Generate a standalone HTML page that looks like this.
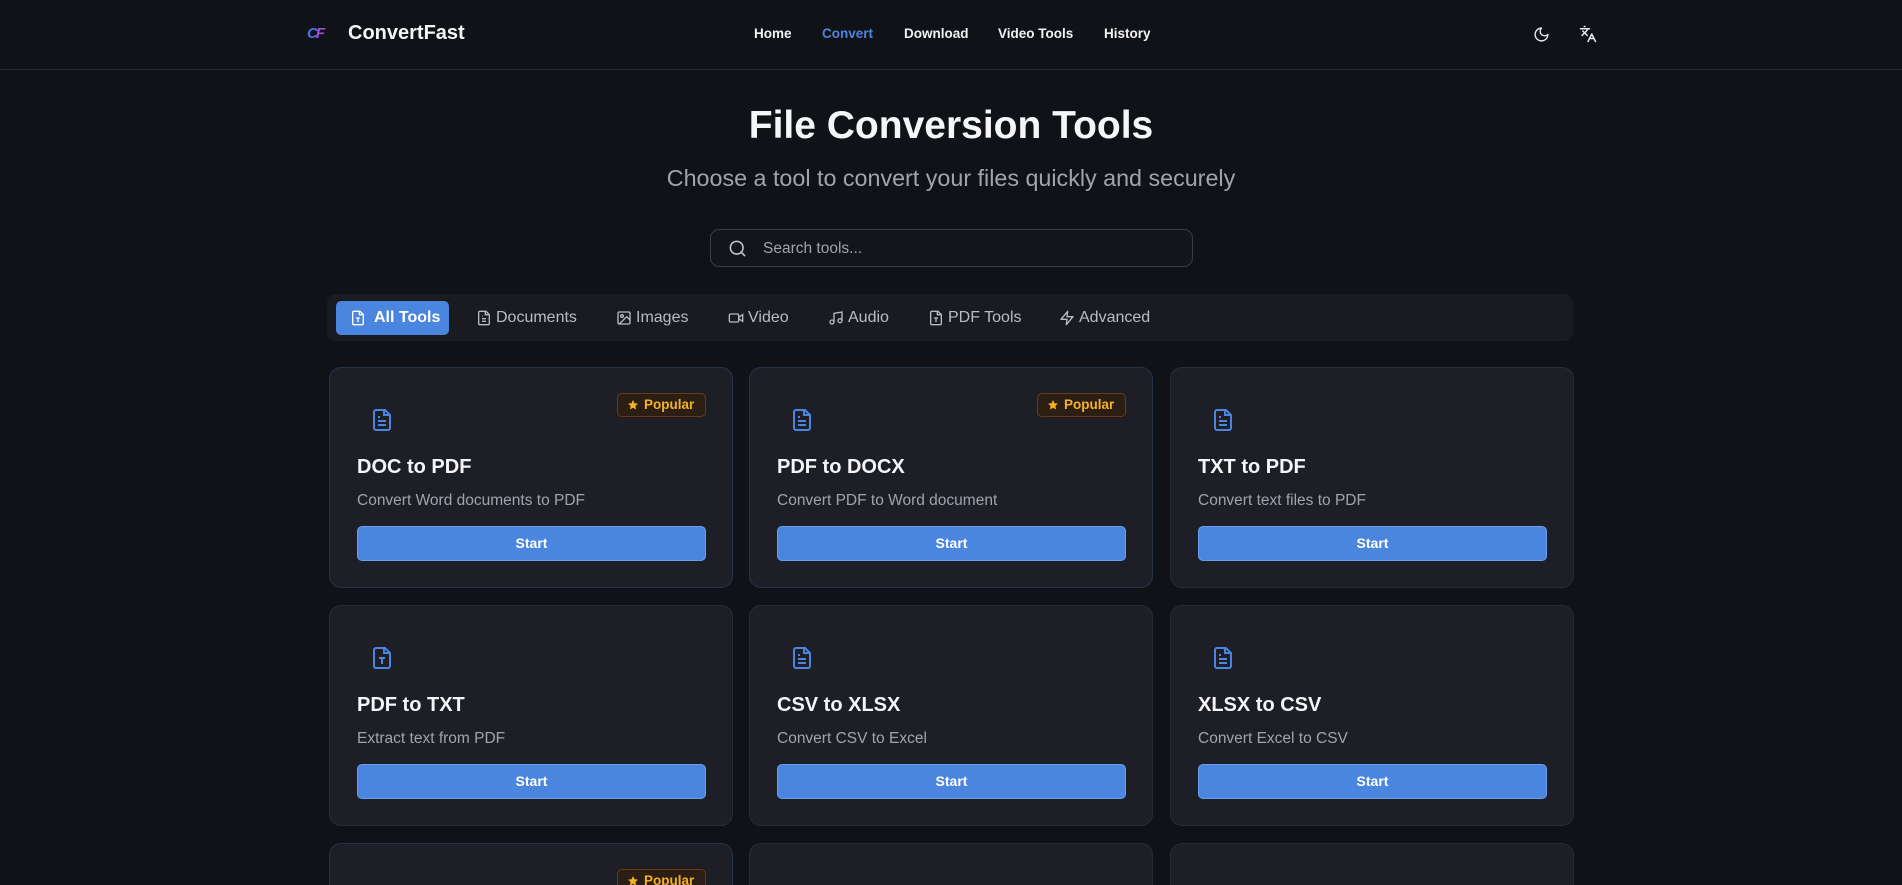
<!DOCTYPE html>
<html><head><meta charset="utf-8"><style>
*{box-sizing:border-box;margin:0;padding:0}
html,body{width:1902px;height:885px;overflow:hidden}
body{background:#111217;font-family:"Liberation Sans",sans-serif;color:#fff}
#w{position:relative;width:1902px;height:885px;overflow:hidden}
.hdr{position:absolute;left:0;top:0;width:1902px;height:70px;border-bottom:1px solid #272930}
.abs{position:absolute}
.nav a{position:absolute;top:26px;font-size:13.5px;font-weight:700;color:#f1f2f4;text-decoration:none}
h1{position:absolute;top:104px;width:100%;text-align:center;font-size:39px;font-weight:700;color:#f5f6f8}
.sub{position:absolute;top:165px;width:100%;text-align:center;font-size:23.3px;color:#a0a4ad}
.search{position:absolute;left:710px;top:229px;width:483px;height:38px;border:1px solid #3b3e46;border-radius:9px;background:#14151a}
.search span{position:absolute;left:52px;top:10px;font-size:15.5px;color:#a0a4ad}
.tabs{position:absolute;left:327px;top:294px;width:1246px;height:47px;background:#1a1b21;border-radius:9px}
.tab{position:absolute;top:7px;height:34px;font-size:16px;color:#b8bcc4;line-height:34px;padding-left:20px}
.tab svg{position:absolute;top:9px;left:0}
.tab.on{background:#4a86e0;border-radius:5px;color:#fff;font-weight:700}
.card{position:absolute;width:404px;height:221px;background:#1e1f26;border:1px solid #2a2c35;border-radius:12px}
.card.b{border-color:#283247}
.card .ic{position:absolute;left:40px;top:40px}
.card h3{position:absolute;left:27px;top:88px;font-size:20px;font-weight:700;color:#f5f6f8}
.card p{position:absolute;left:27px;top:124px;font-size:15.5px;color:#a0a4ad}
.card .btn{position:absolute;left:27px;top:158px;width:349px;height:35px;background:#4a86e0;border-radius:5px;border:1px solid #6a9ff0;text-align:center;line-height:33px;font-size:14px;font-weight:700;color:#fff}
.pop{position:absolute;left:287px;top:25px;width:89px;height:24px;border:1px solid #6b3a14;background:#2d1e14;border-radius:5px;font-size:13.5px;font-weight:700;color:#f5b324;line-height:22px;padding-left:26px}
.pop svg{position:absolute;left:9px;top:5px}
</style></head><body><div id="w">
<div class="hdr">
<div class="abs" style="left:307px;top:25px;font-size:15px;font-weight:700;font-style:italic;letter-spacing:-2px"><span style="color:#4a6fe0">C</span><span style="color:#9b4de0">F</span></div>
<div class="abs" style="left:348px;top:22px;font-size:20px;font-weight:700;color:#f5f6f8">ConvertFast</div>
<div class="nav"><a style="left:754px">Home</a><a style="left:822px;color:#4a86e0">Convert</a><a style="left:904px">Download</a><a style="left:998px">Video Tools</a><a style="left:1104px">History</a></div>
<svg class="abs" style="left:1533px;top:26px" width="17" height="17" viewBox="0 0 24 24" fill="none" stroke="#e5e7eb" stroke-width="2" stroke-linecap="round" stroke-linejoin="round"><path d="M12 3a6 6 0 0 0 9 9 9 9 0 1 1-9-9Z"/></svg>
<svg class="abs" style="left:1579px;top:25px" width="18" height="18" viewBox="0 0 24 24" fill="none" stroke="#e5e7eb" stroke-width="2" stroke-linecap="round" stroke-linejoin="round"><path d="m5 8 6 6M4 14l6-6 2-3M2 5h12M7 2h1M22 22l-5-10-5 10M14 18h6"/></svg>
</div>
<h1>File Conversion Tools</h1>
<div class="sub">Choose a tool to convert your files quickly and securely</div>
<div class="search"><svg class="abs" style="left:17px;top:9px" width="19" height="19" viewBox="0 0 24 24" fill="none" stroke="#c4c7cd" stroke-width="2" stroke-linecap="round"><circle cx="11" cy="11" r="8"/><path d="m21 21-4.3-4.3"/></svg><span>Search tools...</span></div>
<div class="tabs">
<div class="tab on" style="left:9px;width:113px;padding-left:38px"><svg style="left:14px" width="16" height="16" viewBox="0 0 24 24" fill="none" stroke="#fff" stroke-width="2"><path d="M15 2H6a2 2 0 0 0-2 2v16a2 2 0 0 0 2 2h12a2 2 0 0 0 2-2V7Z"/><path d="M14 2v5h5M9 12h6M12 12v6"/></svg>All Tools</div>
<div class="tab" style="left:149px"><svg width="16" height="16" viewBox="0 0 24 24" fill="none" stroke="#b8bcc4" stroke-width="2"><path d="M15 2H6a2 2 0 0 0-2 2v16a2 2 0 0 0 2 2h12a2 2 0 0 0 2-2V7Z"/><path d="M14 2v5h5M9 13h6M9 17h6M9 9h1"/></svg>Documents</div>
<div class="tab" style="left:289px"><svg width="16" height="16" viewBox="0 0 24 24" fill="none" stroke="#b8bcc4" stroke-width="2"><rect x="3" y="3" width="18" height="18" rx="2"/><circle cx="9" cy="9" r="2"/><path d="m21 15-5-5L5 21"/></svg>Images</div>
<div class="tab" style="left:401px"><svg width="16" height="16" viewBox="0 0 24 24" fill="none" stroke="#b8bcc4" stroke-width="2"><rect x="2" y="6" width="14" height="12" rx="2"/><path d="m16 13 6 4V7l-6 4"/></svg>Video</div>
<div class="tab" style="left:501px"><svg width="16" height="16" viewBox="0 0 24 24" fill="none" stroke="#b8bcc4" stroke-width="2"><path d="M9 18V5l12-2v13"/><circle cx="6" cy="18" r="3"/><circle cx="18" cy="16" r="3"/></svg>Audio</div>
<div class="tab" style="left:601px"><svg width="16" height="16" viewBox="0 0 24 24" fill="none" stroke="#b8bcc4" stroke-width="2"><path d="M15 2H6a2 2 0 0 0-2 2v16a2 2 0 0 0 2 2h12a2 2 0 0 0 2-2V7Z"/><path d="M14 2v5h5M9 12h6M12 12v6"/></svg>PDF Tools</div>
<div class="tab" style="left:732px"><svg width="16" height="16" viewBox="0 0 24 24" fill="none" stroke="#b8bcc4" stroke-width="2" stroke-linejoin="round"><path d="M13 2 3 14h9l-1 8 10-12h-9l1-8z"/></svg>Advanced</div>
</div>
<svg width="0" height="0" style="position:absolute"><defs>
<symbol id="doc" viewBox="0 0 24 24"><path d="M15 2H6a2 2 0 0 0-2 2v16a2 2 0 0 0 2 2h12a2 2 0 0 0 2-2V7Z" fill="none" stroke="#4a86e0" stroke-width="2"/><path d="M14 2v5h5M8 13h8M8 17h8M8 9h2" fill="none" stroke="#4a86e0" stroke-width="2"/></symbol>
<symbol id="txt" viewBox="0 0 24 24"><path d="M15 2H6a2 2 0 0 0-2 2v16a2 2 0 0 0 2 2h12a2 2 0 0 0 2-2V7Z" fill="none" stroke="#4a86e0" stroke-width="2"/><path d="M14 2v5h5M9 12h6M12 12v6" fill="none" stroke="#4a86e0" stroke-width="2"/></symbol>
<symbol id="star" viewBox="0 0 24 24"><path d="m12 2 3 6.5 7 .8-5.2 4.8 1.4 7L12 17.6 5.8 21l1.4-7L2 9.3l7-.8z" fill="#f5b324"/></symbol>
</defs></svg>
<div class="card b" style="left:329px;top:367px"><svg class="ic" width="24" height="24"><use href="#doc"/></svg><div class="pop"><svg width="12" height="12"><use href="#star"/></svg>Popular</div><h3>DOC to PDF</h3><p>Convert Word documents to PDF</p><div class="btn">Start</div></div>
<div class="card b" style="left:749px;top:367px"><svg class="ic" width="24" height="24"><use href="#doc"/></svg><div class="pop"><svg width="12" height="12"><use href="#star"/></svg>Popular</div><h3>PDF to DOCX</h3><p>Convert PDF to Word document</p><div class="btn">Start</div></div>
<div class="card" style="left:1170px;top:367px"><svg class="ic" width="24" height="24"><use href="#doc"/></svg><h3>TXT to PDF</h3><p>Convert text files to PDF</p><div class="btn">Start</div></div>
<div class="card" style="left:329px;top:605px"><svg class="ic" width="24" height="24"><use href="#txt"/></svg><h3>PDF to TXT</h3><p>Extract text from PDF</p><div class="btn">Start</div></div>
<div class="card" style="left:749px;top:605px"><svg class="ic" width="24" height="24"><use href="#doc"/></svg><h3>CSV to XLSX</h3><p>Convert CSV to Excel</p><div class="btn">Start</div></div>
<div class="card" style="left:1170px;top:605px"><svg class="ic" width="24" height="24"><use href="#doc"/></svg><h3>XLSX to CSV</h3><p>Convert Excel to CSV</p><div class="btn">Start</div></div>
<div class="card b" style="left:329px;top:843px"><div class="pop"><svg width="12" height="12"><use href="#star"/></svg>Popular</div></div>
<div class="card" style="left:749px;top:843px"></div>
<div class="card" style="left:1170px;top:843px"><svg class="ic" width="24" height="24"><use href="#doc"/></svg></div>
</div></body></html>
